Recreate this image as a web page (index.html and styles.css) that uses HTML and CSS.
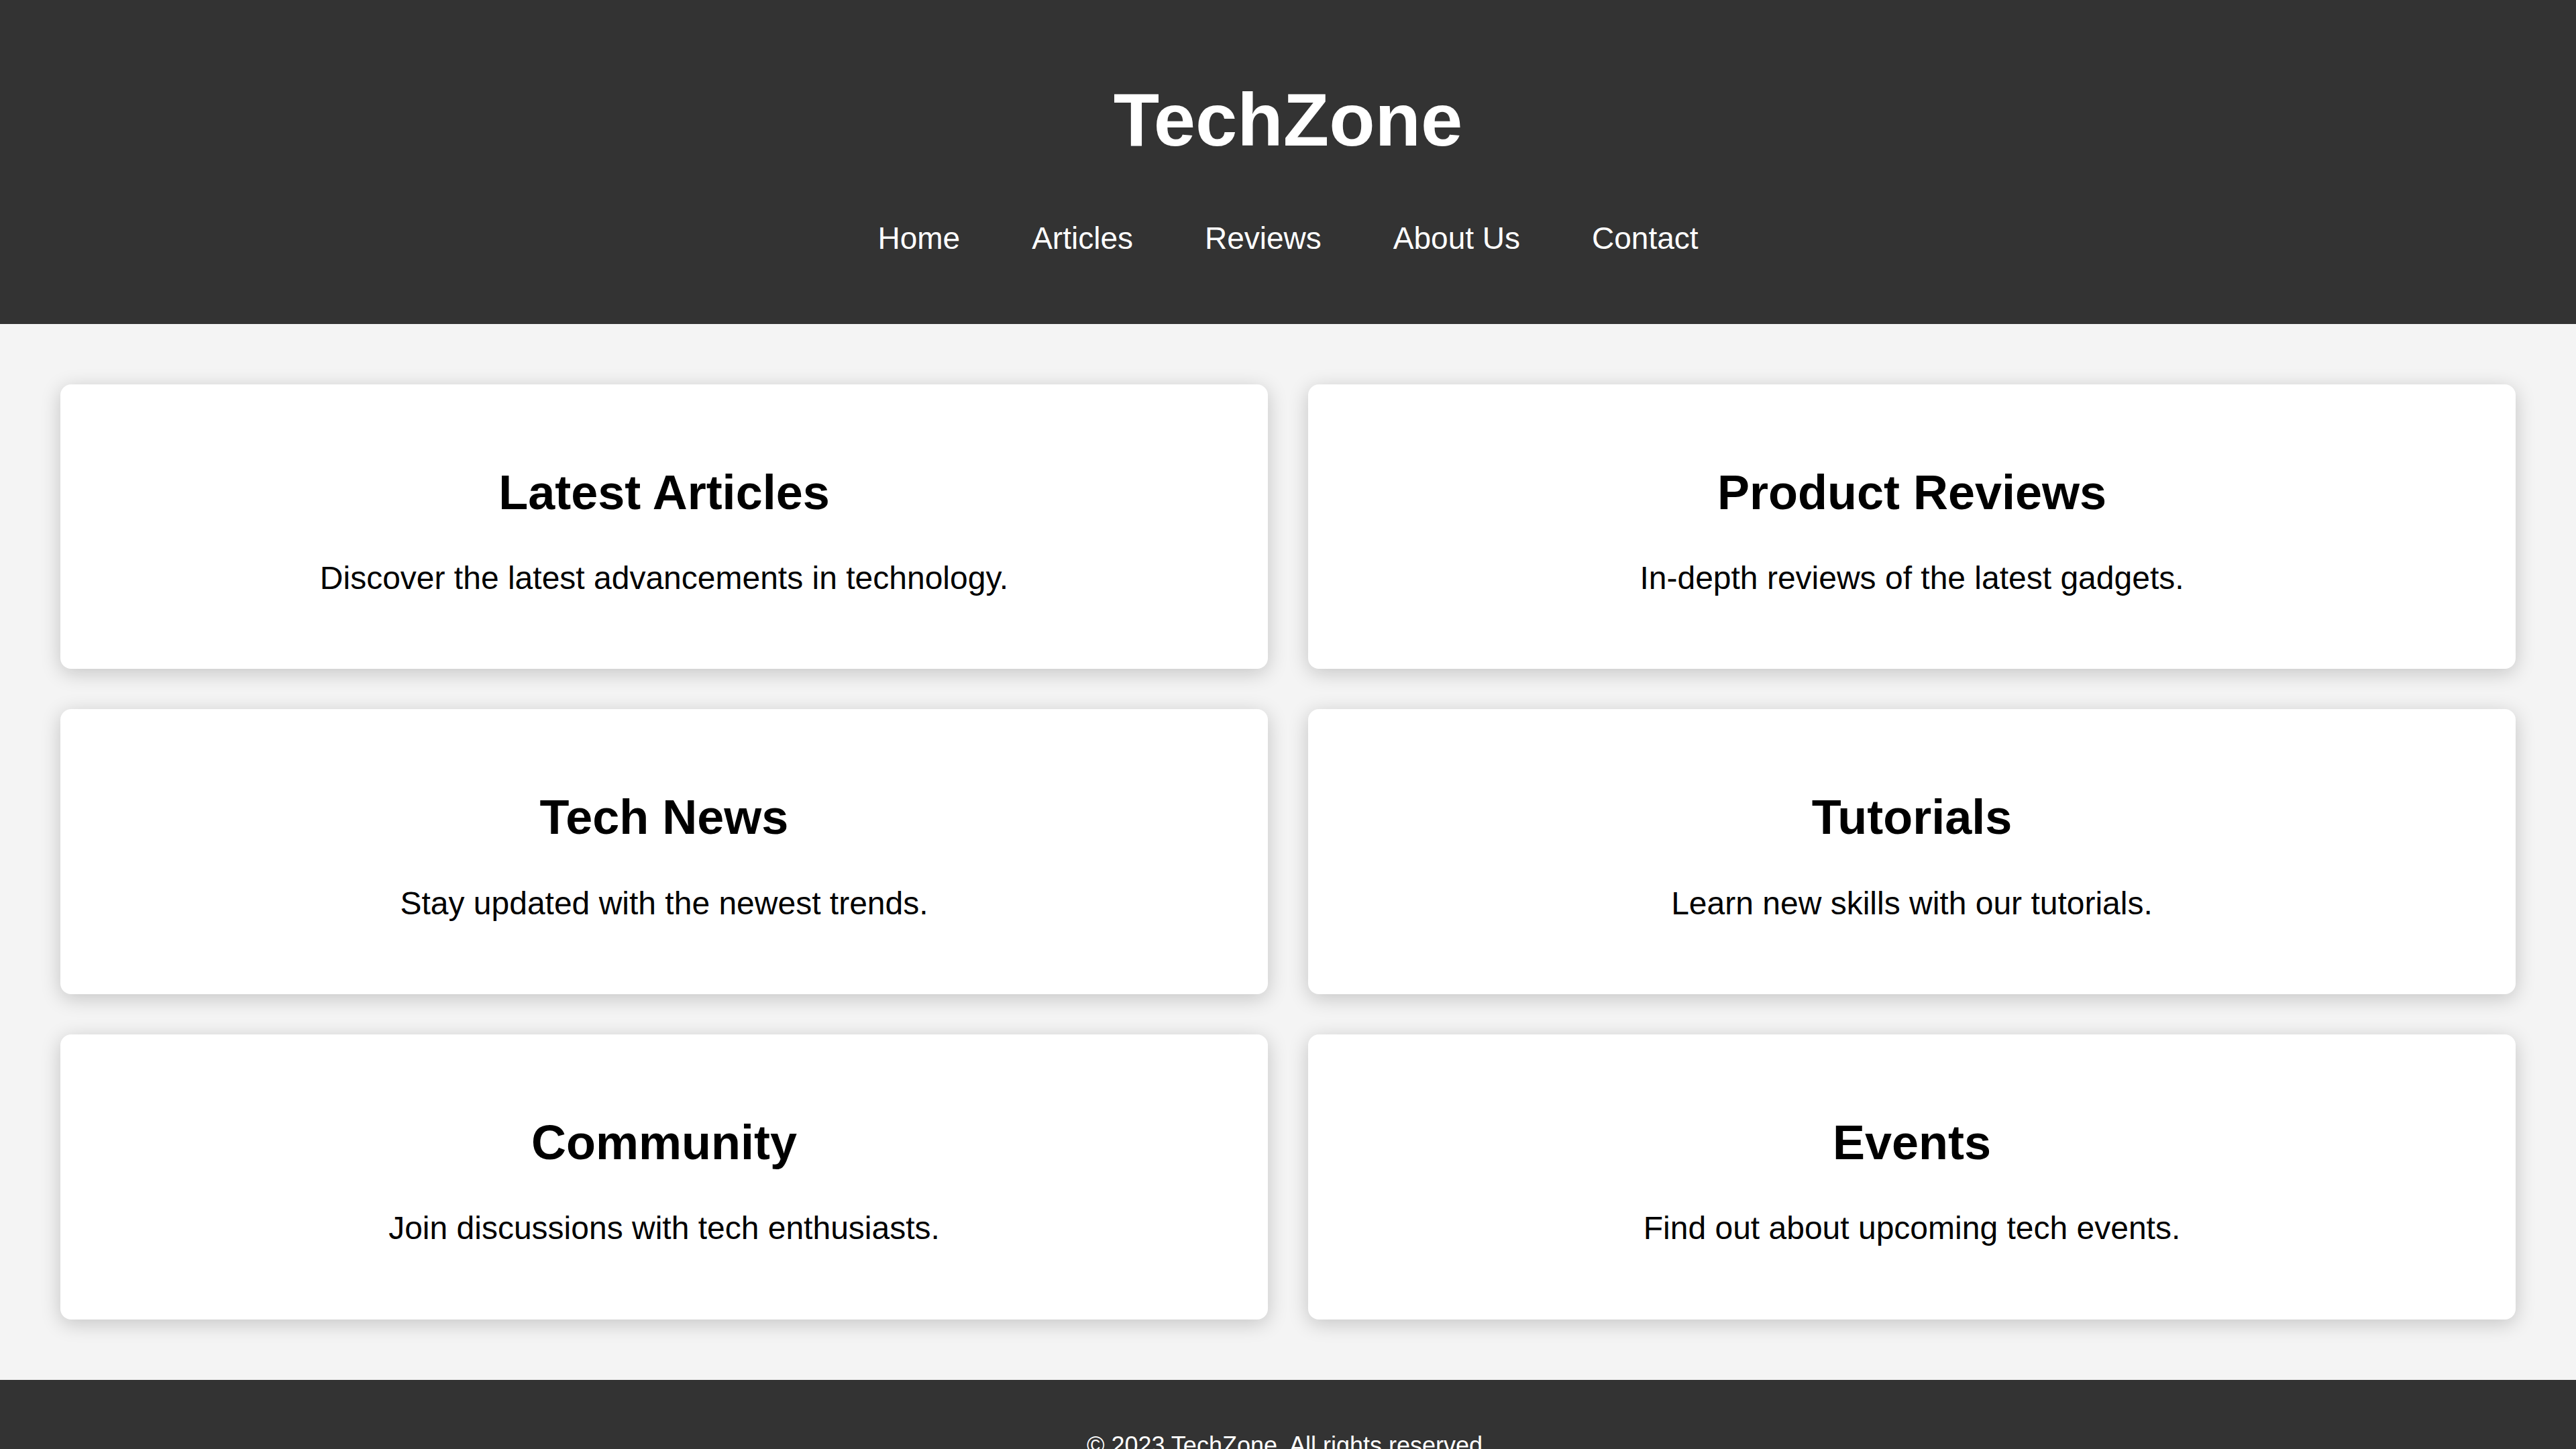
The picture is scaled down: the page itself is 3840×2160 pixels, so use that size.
FILE: index.html
```html
<!DOCTYPE html>
<html lang="en">
<head>
<meta charset="utf-8">
<title>TechZone</title>
<link rel="stylesheet" href="styles.css">
</head>
<body>
<header class="site-header">
  <h1 class="logo">TechZone</h1>
  <nav class="nav">
    <ul class="nav-list">
      <li><a href="#">Home</a></li>
      <li><a href="#">Articles</a></li>
      <li><a href="#">Reviews</a></li>
      <li><a href="#">About Us</a></li>
      <li><a href="#">Contact</a></li>
    </ul>
  </nav>
</header>
<main class="content">
  <section class="card">
    <h2>Latest Articles</h2>
    <p>Discover the latest advancements in technology.</p>
  </section>
  <section class="card">
    <h2>Product Reviews</h2>
    <p>In-depth reviews of the latest gadgets.</p>
  </section>
  <section class="card">
    <h2>Tech News</h2>
    <p>Stay updated with the newest trends.</p>
  </section>
  <section class="card">
    <h2>Tutorials</h2>
    <p>Learn new skills with our tutorials.</p>
  </section>
  <section class="card">
    <h2>Community</h2>
    <p>Join discussions with tech enthusiasts.</p>
  </section>
  <section class="card">
    <h2>Events</h2>
    <p>Find out about upcoming tech events.</p>
  </section>
</main>
<footer class="site-footer">
  <p>&copy; 2023 TechZone. All rights reserved.</p>
</footer>
</body>
</html>
```
FILE: styles.css
```css
* { box-sizing: border-box; }

body {
  margin: 0;
  background: #f4f4f4;
  font-family: "Liberation Sans", Arial, Helvetica, sans-serif;
  color: #000;
  line-height: 1.15;
}

.site-header {
  background: #333333;
  color: #fff;
  text-align: center;
  padding: 115px 0 101px;
}

.logo {
  margin: 0 0 85px;
  font-size: 112px;
  font-weight: bold;
  line-height: 1.15;
}

.nav-list {
  list-style: none;
  margin: 0;
  padding: 0;
  display: flex;
  justify-content: center;
  gap: 107px;
  font-size: 46px;
}

.nav-list a {
  color: #fff;
  text-decoration: none;
}

.content {
  padding: 90px;
  display: grid;
  grid-template-columns: 1fr 1fr;
  gap: 60px;
}

.card {
  background: #fff;
  border-radius: 16px;
  padding: 60px;
  text-align: center;
  box-shadow: 0 6px 30px rgba(0, 0, 0, 0.2);
}

.card h2 {
  margin: 60px 0;
  font-size: 72px;
  font-weight: bold;
  line-height: 1.14;
}

.card p {
  margin: 48px 0;
  font-size: 48px;
  line-height: 1.14;
}

.site-footer {
  background: #333333;
  color: #fff;
  text-align: center;
  padding: 41px 0 40px;
}

.site-footer p {
  margin: 36px 0;
  font-size: 36px;
}
```
